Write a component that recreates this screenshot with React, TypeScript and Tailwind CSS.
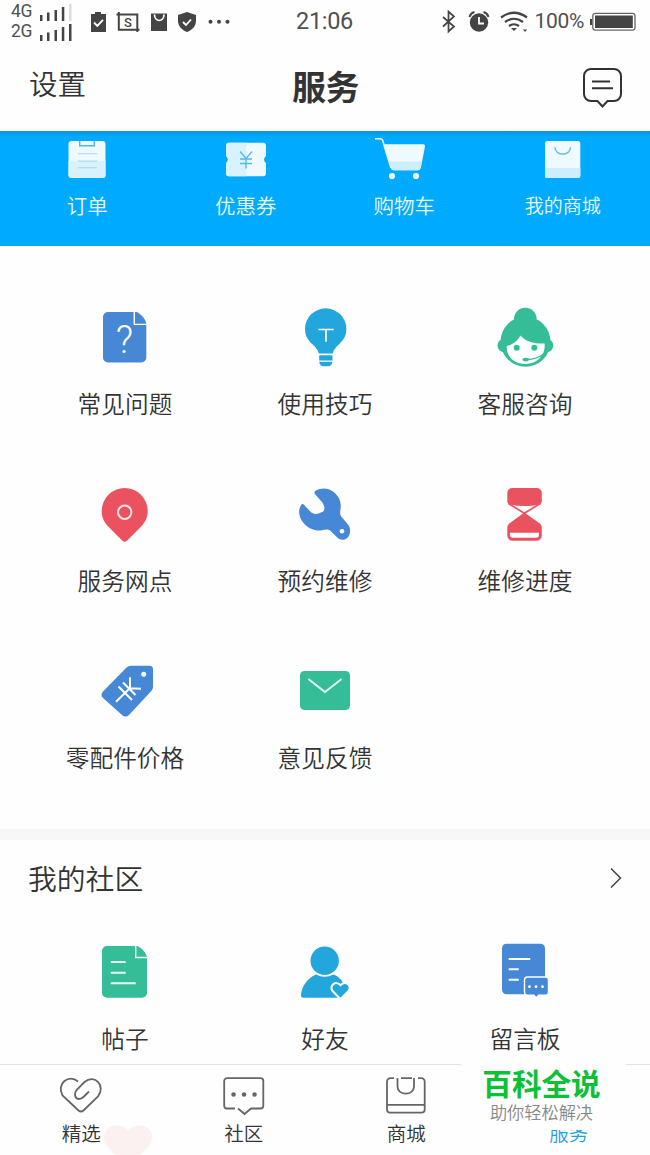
import React from 'react';

interface Item {
  label: string;
  icon: React.ReactNode;
  size?: string;
}

const BLUE = '#4687d6';
const SKY = '#22a6dc';
const GREEN = '#35bd98';
const RED = '#ea5260';

const Icon: React.FC<{ children: React.ReactNode }> = ({ children }) => (
  <svg className="h-[60px] w-[60px] shrink-0 overflow-visible" viewBox="0 0 60 60" fill="none">
    {children}
  </svg>
);

const MallIcon: React.FC<{ children: React.ReactNode }> = ({ children }) => (
  <svg className="h-12 w-[60px] shrink-0 overflow-visible" viewBox="0 0 60 48" fill="none">
    {children}
  </svg>
);

const mallItems: Item[] = [
  {
    label: '订单',
    size: 'text-[20.5px]',
    icon: (
      <MallIcon>
        <rect x="11.5" y="7" width="37" height="37" rx="3" fill="#effaff" />
        <path d="M11.5 27h37v14a3 3 0 0 1-3 3h-31a3 3 0 0 1-3-3z" fill="#d8f3fe" />
        <path d="M22.7 7v4.7h14.6V7" stroke="#4db9ea" strokeWidth="1.4" />
        <path d="M20.8 19.7h19.4M20.8 27h19.4M20.8 33.7h19.4" stroke="#9fd9f2" strokeWidth="1.1" />
      </MallIcon>
    ),
  },
  {
    label: '优惠券',
    size: 'text-[20.5px]',
    icon: (
      <MallIcon>
        <path d="M13 8.7h34a3 3 0 0 1 3 3v10q-4 3.800 0 7.600v10a3 3 0 0 1-3 3H13a3 3 0 0 1-3-3v-10q4-3.800 0-7.600v-10a3 3 0 0 1 3-3z" fill="#effaff" />
        <path d="M13 8.7h17.500v33.600H13a3 3 0 0 1-3-3v-10q4-3.800 0-7.600v-10a3 3 0 0 1 3-3z" fill="#d8f3fe" />
        <path d="M24 17.500l6 7 6-7M30 24.500v10M24 25h12M24 29.500h12" stroke="#53bce6" strokeWidth="1.4" />
      </MallIcon>
    ),
  },
  {
    label: '购物车',
    size: 'text-[20.5px]',
    icon: (
      <MallIcon>
        <path d="M1 4.800h5.500q1.700 0 2.300 2l2 7L17 34" stroke="#effaff" strokeWidth="1.600" />
        <path d="M10 10.300h39q2.400.2 1.900 2.700l-4 20.500q-.7 2.700-3 2.700H20q-2.700 0-3.400-2.700z" fill="#effaff" />
        <path d="M15 27.500h33l-1.200 6q-.7 2.700-3 2.700H20q-2.700 0-3.400-2.700z" fill="#cdeffd" />
        <circle cx="18" cy="42" r="3.100" fill="#effaff" />
        <circle cx="42" cy="42" r="3.100" fill="#effaff" />
      </MallIcon>
    ),
  },
  {
    label: '我的商城',
    size: 'text-[19px]',
    icon: (
      <MallIcon>
        <rect x="12" y="7" width="35.300" height="37" rx="2.500" fill="#effaff" />
        <path d="M12 34h35.300v7.500a2.500 2.500 0 0 1-2.500 2.500H14.500a2.500 2.500 0 0 1-2.500-2.500z" fill="#cdeffd" />
        <path d="M22 13.300c0 9 15.500 9 15.500 0" stroke="#69c1e4" strokeWidth="1.500" />
      </MallIcon>
    ),
  },
];

const serviceItems: Item[] = [
  {
    label: '常见问题',
    icon: (
      <Icon>
        <path d="M13 4h29q7 4 9.300 11v34.500a5 5 0 0 1-5 5H13a5 5 0 0 1-5-5V9a5 5 0 0 1 5-5z" fill={BLUE} />
        <path d="M39.300 3.500v12.900h12.500" stroke="#fff" strokeWidth="1.400" />
        <text x="29.500" y="45" textAnchor="middle" fill="#fff" fontFamily="Roboto" fontWeight="300" fontSize="38">?</text>
      </Icon>
    ),
  },
  {
    label: '使用技巧',
    icon: (
      <Icon>
        <path d="M30.700.300a20.700 20.700 0 0 1 20.700 20.700c0 7.500-3.500 11.500-7.600 15.600-3 3-5.300 5-6 9H23.700c-.8-4-3-6-6-9-4.200-4.100-7.700-8.100-7.700-15.600A20.700 20.700 0 0 1 30.700.300z" fill={SKY} />
        <path d="M24.200 47.200h13.300v5.200H24.200zM24.300 53.800h13c0 3-2 4.400-4 4.400h-5c-2.200 0-4-1.400-4-4.400z" fill={SKY} />
        <path d="M23.300 21.500h15.400M31 21.500v12.300" stroke="#fff" strokeWidth="1.700" />
      </Icon>
    ),
  },
  {
    label: '客服咨询',
    icon: (
      <Icon>
        <circle cx="30.300" cy="11" r="11.300" fill={GREEN} />
        <circle cx="30.500" cy="33.700" r="25" fill={GREEN} />
        <circle cx="9.300" cy="37.500" r="6.800" fill={GREEN} />
        <circle cx="51.500" cy="37.500" r="6.800" fill={GREEN} />
        <path d="M11.700 38C17 37.300 22.500 33 25.500 27.500 31 34 40 36 49.500 35.500c1.500 10.500-6.500 20.500-19 20.500S11.300 47.500 11.700 38z" fill="#fff" />
        <circle cx="21.700" cy="39.700" r="3" fill={GREEN} />
        <circle cx="39.300" cy="39.700" r="3" fill={GREEN} />
        <ellipse cx="30.700" cy="51.600" rx="3.200" ry="1.900" fill={GREEN} />
        <path d="M31 51.600q12-.3 19-6.600" stroke={GREEN} strokeWidth="1.300" />
      </Icon>
    ),
  },
  {
    label: '服务网点',
    icon: (
      <Icon>
        <path d="M29.700 3a23 23 0 0 1 23 23c0 6.500-2.700 11.500-6.500 15.500L32 55.700q-2.300 2-4.600 0L13.200 41.500C9.400 37.500 6.700 32.500 6.700 26a23 23 0 0 1 23-23z" fill={RED} />
        <circle cx="29.700" cy="27.300" r="6.700" stroke="#fff" strokeOpacity=".85" strokeWidth="2" />
      </Icon>
    ),
  },
  {
    label: '预约维修',
    icon: (
      <Icon>
        <path d="M20 9c-1-1.500-.7-2.500.5-3.200C26 2.500 33 2.500 38 6.500c6 4.500 8.500 10.500 7.600 17-.6 4-.8 6 .8 8.200l7 8.300c2.500 3.500 2.300 9-.6 12.500-3 3-7.500 3-10.300.3l-7.300-7.300c-2.500-1.800-5-.8-8.500-.2-6 1-12.700-1.300-17.200-6.300C4 33 2.500 26 6 20.200c.8-1.500 2-1.500 3-.4l6.500 7c2.200 2.200 5 2.500 8 1.700l4.200-1.700c1.500-.8 2-3 1.500-5.300-.6-2-1.200-3.500-2.500-4.800z" fill={BLUE} />
        <circle cx="47" cy="46.300" r="2.300" fill="#fff" />
      </Icon>
    ),
  },
  {
    label: '维修进度',
    icon: (
      <Icon>
        <path d="M17.300 3h24.500a5 5 0 0 1 5 5v9l-1.500 2.200Q30 23 13.800 19.200L12.300 17V8a5 5 0 0 1 5-5z" fill={RED} />
        <path d="M13.500 18.500l15.800 9.800 16-9.800" stroke={RED} strokeWidth="1.700" />
        <path d="M29.300 27.500l15.500 11q2 1.500 2 4v8a5.200 5.200 0 0 1-5.200 5.200H17.500a5.200 5.200 0 0 1-5.200-5.200v-8q0-2.500 2-4z" fill={RED} />
        <path d="M15 47.800h29v2q0 3-3 3H18q-3 0-3-3z" fill="#fff" />
      </Icon>
    ),
  },
  {
    label: '零配件价格',
    icon: (
      <Icon>
        <path d="M36 3.700h18.500A3.500 3.500 0 0 1 58 7.200V25q0 2.200-1.500 3.700L34 53q-3.500 3.200-7 0L8 36q-3-3.200 0-6.500L31.500 5.500q2-1.800 4.500-1.800z" fill={BLUE} />
        <circle cx="48.700" cy="12.200" r="2.500" fill="#fff" />
        <path d="M21 39.700l13.800-13.400M35 15.300v11l11 .500M23.500 24.500l13.500 13.500M28 20.500l12.500 12.500" stroke="#fff" strokeWidth="2" />
      </Icon>
    ),
  },
  {
    label: '意见反馈',
    icon: (
      <Icon>
        <rect x="5" y="9" width="50" height="39" rx="4.500" fill={GREEN} />
        <path d="M13.300 17L30 30 46.500 17" stroke="#e6fff6" strokeWidth="1.900" />
      </Icon>
    ),
  },
];

const communityItems: Item[] = [
  {
    label: '帖子',
    icon: (
      <Icon>
        <path d="M12 4h30.500q7 3.500 9.500 10.500v36.300a5 5 0 0 1-5 5H12a5 5 0 0 1-5-5V9a5 5 0 0 1 5-5z" fill={GREEN} />
        <path d="M40.700 3.500v12h12" stroke="#fff" strokeWidth="1.400" />
        <path d="M15.700 20h15M15.700 30.700h15M15.700 41.300h25" stroke="#e6fff6" strokeWidth="2" />
      </Icon>
    ),
  },
  {
    label: '好友',
    icon: (
      <Icon>
        <path d="M21 32.500q8.700 4.500 17.500 0C45 35 49 40 51 48l-3 7.700H8.500q-2.700 0-2.500-2.500C6.500 44.500 12.500 36 21 32.500z" fill={SKY} />
        <circle cx="29.700" cy="18.700" r="14.200" fill={SKY} />
        <path d="M45.500 57.200l-7.700-7.900c-4.500-5 3-11.600 7.700-6.100 4.700-5.500 12.500.8 7.700 6.100z" fill={SKY} stroke="#fff" strokeWidth="2" />
      </Icon>
    ),
  },
  {
    label: '留言板',
    icon: (
      <Icon>
        <rect x="7" y="1.700" width="43" height="50.500" rx="4.500" fill={BLUE} />
        <path d="M13.700 17h21.600M13.700 27.300h10M13.700 37.700h10" stroke="#fff" strokeWidth="1.900" />
        <path d="M32.500 35h18a3 3 0 0 1 3 3v12.300a3 3 0 0 1-3 3h-7L41.200 56 39 53.300h-6.500a3 3 0 0 1-3-3V38a3 3 0 0 1 3-3z" fill={BLUE} stroke="#fff" strokeWidth="1.400" />
        <circle cx="34.500" cy="44.700" r="1.400" fill="#fff" />
        <circle cx="41" cy="44.700" r="1.400" fill="#fff" />
        <circle cx="47.500" cy="44.700" r="1.400" fill="#fff" />
      </Icon>
    ),
  },
];

const tabs: Item[] = [
  {
    label: '精选',
    icon: (
      <path d="M18 4.500C9-3.500-4 6.500 2.500 18.500L18.500 33.500q2.500 2 5 0L38 19.500c8-10.500-3-23-13.500-14.500L17 12.500c-3.500 4-2 9.500 2 9.500 2 0 3.500-1 5-2.500l5-5" />
    ),
  },
  {
    label: '社区',
    icon: (
      <>
        <path d="M12 31.500H4a2.800 2.800 0 0 1-2.800-2.800V4A2.800 2.800 0 0 1 4 1.200h33.500A2.800 2.800 0 0 1 40.300 4v24.700a2.800 2.800 0 0 1-2.800 2.800H28L21.500 37 15 31.500" />
        <path d="M10.500 17.500h.1M21 17.500h.1M31.500 17.500h.1" strokeWidth="4.500" strokeLinecap="round" />
      </>
    ),
  },
  {
    label: '商城',
    icon: (
      <>
        <path d="M9 1.200H5.500A3.500 3.500 0 0 0 2 4.700v27.800A3.200 3.200 0 0 0 5.200 35.700h31.300a3.200 3.200 0 0 0 3.200-3.200V4.700a3.500 3.500 0 0 0-3.500-3.500H33M16 1.200h11M2 27.800h37.500" />
        <path d="M12.500 1v8.500c0 9.500 16.500 9.500 16.500 0V1" />
      </>
    ),
  },
];

const SignalBars: React.FC<{ weak?: boolean }> = ({ weak }) => (
  <svg className="h-[18px] w-8" viewBox="0 0 32 18">
    <path d="M0 12h2.500v6H0zM7 9.500h2.500V18H7zM14.500 7h2.500v11h-2.500zM21.800 4h2.500v14h-2.500z" fill="#444" />
    <path d="M29 1h2.500v17H29z" fill={weak ? '#ddd' : '#444'} />
  </svg>
);

const StatusBar: React.FC = () => (
  <div className="flex h-[42px] shrink-0 items-center pl-[11px] pr-[14px] pt-px font-['Roboto','Liberation_Sans',sans-serif] font-normal text-[#505050]">
    <div className="flex w-[61px] flex-col gap-px text-[17.500px] leading-[19px] tracking-[-0.3px]">
      <div className="flex items-center justify-between">
        <span>4G</span>
        <SignalBars weak />
      </div>
      <div className="flex items-center justify-between">
        <span>2G</span>
        <SignalBars />
      </div>
    </div>
    <svg className="ml-[18px] h-6 w-[142px] shrink-0" viewBox="0 0 142 24" fill="none">
      <path d="M1 4h4V2h6v2h5v18H1z" fill="#444" />
      <path d="M4 12.500l3.300 3.300L13 9.800" stroke="#fff" strokeWidth="1.900" />
      <path d="M26.500 4.500h20.800V22M28.800 2v17.700H49.500" stroke="#444" strokeWidth="2" />
      <text x="38" y="16.500" textAnchor="middle" fill="#444" fontSize="13" fontWeight="500">S</text>
      <path d="M61 3.500h16V21H61z" fill="#444" />
      <path d="M64.500 4.500c0 8 9.500 8 9.500 0" stroke="#fff" strokeWidth="1.700" />
      <path d="M97 2l9 3v6c0 5-4 9-9 11-5-2-9-6-9-11V5z" fill="#444" />
      <path d="M93 12l3 3 5-5.500" stroke="#fff" strokeWidth="1.800" />
      <circle cx="120.500" cy="11.800" r="2" fill="#444" />
      <circle cx="129" cy="11.800" r="2" fill="#444" />
      <circle cx="137.500" cy="11.800" r="2" fill="#444" />
    </svg>
    <span className="ml-[64px] text-[23.500px] leading-none tracking-[-0.3px]">21:06</span>
    <svg className="ml-auto h-6 w-[88px] shrink-0" viewBox="0 0 88 24" fill="none" stroke="#444">
      <path d="M2 7l11 9.500-5.500 5V1.500l5.500 5L2 16.500" strokeWidth="1.700" />
      <circle cx="38" cy="12.500" r="9.200" fill="#444" stroke="none" />
      <path d="M28.500 7q1.200-4 5-5M42.500 2q3.800 1 5 5" strokeWidth="2" />
      <path d="M38 7v6.500h5" stroke="#fff" strokeWidth="1.800" />
      <path d="M60 7.500q13-9.500 26 0M64 12q9-6.500 18 0M68 16q5-3.500 10 0" strokeWidth="2.200" />
      <path d="M70 18l3 3 3-3zM82 19.500h4l-2 2.500z" fill="#444" stroke="none" />
    </svg>
    <span className="ml-[5px] text-[21px] leading-none tracking-[-0.3px]">100%</span>
    <svg className="ml-[6px] h-5 w-[46px] shrink-0" viewBox="0 0 46 20" fill="none">
      <path d="M0 7h2v6H0z" fill="#444" />
      <rect x="2.800" y="1.300" width="42.200" height="16.800" rx="2.500" stroke="#666" strokeWidth="1.300" />
      <rect x="5" y="3.500" width="37.800" height="12.500" fill="#444" />
    </svg>
  </div>
);

const ItemCell: React.FC<{ item: Item }> = ({ item }) => (
  <div className="flex h-[177px] flex-col items-center">
    {item.icon}
    <span className="mt-[17px] text-[23.700px] leading-9">{item.label}</span>
  </div>
);

export default function App() {
  return (
    <div className="relative flex h-[1155px] w-[650px] flex-col overflow-hidden bg-[#fefefe] font-['Noto_Sans_CJK_SC',sans-serif] font-[350] text-[#333]">
      <StatusBar />

      <header className="grid h-[89px] shrink-0 grid-cols-3 items-center pl-[29px] pr-[28px]">
        <span className="-mt-[7px] text-[28.500px] leading-10">设置</span>
        <h1 className="-mt-0.5 text-center text-[34px] font-bold leading-[48px] tracking-[-0.5px]">服务</h1>
        <svg className="mt-1 h-[42px] w-10 translate-x-px justify-self-end" viewBox="0 0 40 42" fill="none" stroke="#333" strokeWidth="2">
          <path d="M8 1h23a7 7 0 0 1 7 7v18a7 7 0 0 1-7 7h-6.500L19.500 38.500 14.500 33H8a7 7 0 0 1-7-7V8a7 7 0 0 1 7-7z" />
          <path d="M9 13.500h18M9 20.300h21" />
        </svg>
      </header>

      {/* Mall shortcuts */}
      <section className="grid h-[115px] shrink-0 grid-cols-4 bg-[#00abff] bg-linear-to-b from-[#0796dd] to-[#00abff] to-[6px] px-2 pt-[3px] text-[#e9f8ff]">
        {mallItems.map((item) => (
          <div key={item.label} className="flex flex-col items-center">
            {item.icon}
            <span className={`${item.size} mt-2 leading-[30px]`}>{item.label}</span>
          </div>
        ))}
      </section>

      {/* Services */}
      <section className="grid h-[583px] shrink-0 grid-cols-3 content-start px-[25px] pt-[62px]">
        {serviceItems.map((item) => (
          <ItemCell key={item.label} item={item} />
        ))}
      </section>
      <div className="h-[11px] shrink-0 bg-[#f7f7f7]" />

      {/* Community */}
      <section className="h-[224px] shrink-0 overflow-hidden">
        <div className="flex h-[77px] items-center justify-between pl-7 pr-[28px]">
          <h2 className="-mt-0.5 text-[28.800px] leading-10">我的社区</h2>
          <svg className="-mt-0.5 h-5 w-3" viewBox="0 0 12 20" fill="none" stroke="#444" strokeWidth="1.500">
            <path d="M1 .5l9.500 9.500L1 19.500" />
          </svg>
        </div>
        <div className="grid grid-cols-3 px-[25px] pt-[25px]">
          {communityItems.map((item) => (
            <div key={item.label} className="flex flex-col items-center">
              {item.icon}
              <span className="mt-[18px] text-[23.700px] leading-9">{item.label}</span>
            </div>
          ))}
        </div>
      </section>

      <nav className="grid h-[91px] shrink-0 grid-cols-4 border-t border-[#e3e3e3] pt-3">
        {tabs.map((tab) => (
          <div key={tab.label} className="flex flex-col items-center">
            <svg className="h-[38px] w-[42px] overflow-visible" viewBox="0 0 42 38" fill="none" stroke="#666" strokeWidth="1.800">
              {tab.icon}
            </svg>
            <span className="mt-1 text-[19.500px] leading-7">{tab.label}</span>
          </div>
        ))}
        <div className="flex flex-col items-center pt-[42px]">
          <span className="text-[19.500px] leading-7 text-[#1fa0dc]">服务</span>
        </div>
      </nav>

      {/* Floating overlays */}
      <svg className="absolute left-[103px] top-[1125px] h-[30px] w-[50px] opacity-50" viewBox="0 0 50 30" fill="#fce6e6">
        <path d="M25 5C18-2 5-1 1.500 8-1 17 6 24 13 30h24c7-6 14-13 11.500-22C45-1 32-2 25 5z" />
      </svg>
      <div className="absolute left-[461px] top-[1060px] flex h-[70px] w-[165px] flex-col items-center bg-[#fefefe] pr-1">
        <span className="mt-[3px] text-[29.600px] font-bold leading-10 text-[#0cc136]">百科全说</span>
        <span className="mt-px text-[17.200px] leading-4 text-[#888]">助你轻松解决</span>
      </div>
    </div>
  );
}
